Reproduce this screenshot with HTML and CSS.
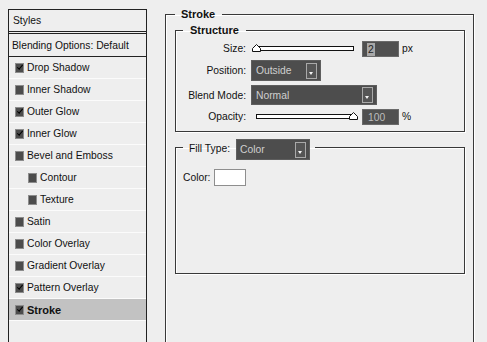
FILE: index.html
```html
<!DOCTYPE html>
<html lang="en">
<head>
  <meta charset="UTF-8">
  <title>Layer Style - Stroke</title>
  <link rel="stylesheet" href="styles.css">
</head>
<body>
  <div class="page">
    <aside class="styles-panel">
      <div class="panel-head">Styles</div>
      <div class="panel-row blend">Blending Options: Default</div>
      <div class="panel-row"><span class="box on"></span>Drop Shadow</div>
      <div class="panel-row"><span class="box"></span>Inner Shadow</div>
      <div class="panel-row"><span class="box on"></span>Outer Glow</div>
      <div class="panel-row"><span class="box on"></span>Inner Glow</div>
      <div class="panel-row"><span class="box"></span>Bevel and Emboss</div>
      <div class="panel-row sub"><span class="box"></span>Contour</div>
      <div class="panel-row sub"><span class="box"></span>Texture</div>
      <div class="panel-row"><span class="box"></span>Satin</div>
      <div class="panel-row"><span class="box"></span>Color Overlay</div>
      <div class="panel-row"><span class="box"></span>Gradient Overlay</div>
      <div class="panel-row"><span class="box on"></span>Pattern Overlay</div>
      <div class="panel-row active"><span class="box on"></span>Stroke</div>
    </aside>

    <fieldset class="group outer">
      <legend class="title">Stroke</legend>

      <fieldset class="group structure">
        <legend class="title">Structure</legend>
        <div class="form-grid">
          <label>Size:</label>
          <div class="ctrl">
            <div class="slider">
              <div class="track"></div>
              <svg class="thumb" width="9" height="8" viewBox="0 0 9 8"><polygon points="4.5,0.5 8.5,4.5 8.5,7.5 0.5,7.5 0.5,4.5" fill="#fff" stroke="#111"/></svg>
            </div>
            <span class="num"><span class="picked">2</span></span>
            <span class="unit">px</span>
          </div>

          <label>Position:</label>
          <div class="ctrl">
            <span class="select position">Outside<span class="arrow"></span></span>
          </div>

          <label>Blend Mode:</label>
          <div class="ctrl">
            <span class="select blend-mode">Normal<span class="arrow"></span></span>
          </div>

          <label>Opacity:</label>
          <div class="ctrl">
            <div class="slider">
              <div class="track"></div>
              <svg class="thumb end" width="9" height="8" viewBox="0 0 9 8"><polygon points="4.5,0.5 8.5,4.5 8.5,7.5 0.5,7.5 0.5,4.5" fill="#fff" stroke="#111"/></svg>
            </div>
            <span class="num">100</span>
            <span class="unit">%</span>
          </div>
        </div>
      </fieldset>

      <fieldset class="group fill">
        <legend class="fill-legend">
          <span>Fill Type:</span>
          <span class="select fill-type">Color<span class="arrow"></span></span>
        </legend>
        <div class="fill-body">
          <label>Color:</label>
          <span class="swatch"></span>
        </div>
      </fieldset>
    </fieldset>
  </div>
</body>
</html>
```

FILE: styles.css
```css
html, body {
  margin: 0;
  height: 100%;
  overflow: hidden;
}

body {
  background: #eeeeee;
  font-family: 'Liberation Sans', Arial, sans-serif;
  font-size: 10.3px;
  color: #111;
}

.page {
  display: flex;
  align-items: flex-start;
}

/* left list of effects */
.styles-panel {
  margin: 9px 0 0 8px;
  width: 137px;
  height: 333px;
  border: 1px solid #222;
  border-bottom: none;
}

.panel-head {
  height: 21px;
  line-height: 21px;
  padding-left: 4px;
  border-bottom: 3px double #222;
}

.panel-row {
  display: flex;
  align-items: center;
  gap: 3px;
  height: 21px;
  padding-left: 6px;
  border-bottom: 1px solid #fbfbfb;
}

.panel-row.blend {
  height: 22px;
  padding-left: 3px;
  border-bottom: 1px solid #222;
}

.panel-row.sub {
  padding-left: 19px;
}

.panel-row.active {
  background: #c2c2c2;
  font-weight: bold;
  font-size: 11px;
}

.box {
  position: relative;
  width: 7px;
  height: 8px;
  background: #4c4c4c;
  border: 1px solid #8c8c8c;
  flex: none;
}

.box.on::after {
  content: "";
  position: absolute;
  left: 1px;
  top: 1px;
  width: 5px;
  height: 2px;
  border-left: 1.5px solid #000;
  border-bottom: 1.5px solid #000;
  transform: rotate(-50deg);
}

/* grouped boxes */
.group {
  margin: 0;
  padding: 0;
  min-width: 0;
  border: 1px solid #383838;
  box-shadow: 1px 1px 0 #fff, inset 1px 1px 0 #fff;
}

.title {
  font-weight: bold;
  font-size: 11px;
  line-height: 13px;
  padding: 0 7px;
  margin-left: 7px;
}

.outer {
  margin: 8px 0 0 18px;
  width: 290px;
  height: 340px;
  padding: 0 8px 0 9px;
}

.outer > .title {
  margin-left: 0;
  padding: 0 7px 0 6px;
}

.structure {
  margin-top: 3px;
}

.form-grid {
  display: grid;
  grid-template-columns: 70px 1fr;
  grid-template-rows: 15px 21px 20px 15px;
  column-gap: 5px;
  row-gap: 4px;
  padding: 4px 0 7px;
}

.form-grid label {
  text-align: right;
  align-self: center;
}

.ctrl {
  display: flex;
  align-items: center;
}

.slider {
  position: relative;
  width: 106px;
  height: 15px;
  margin-left: 1px;
}

.track {
  margin: 5px 4px 0;
  height: 3px;
  background: #fff;
  border: 1px solid #111;
}

.thumb {
  position: absolute;
  left: 0;
  top: 3px;
}

.thumb.end {
  left: auto;
  right: 0;
}

.num {
  box-sizing: border-box;
  width: 37px;
  height: 16px;
  margin-left: 4px;
  padding-left: 5px;
  line-height: 15px;
  background: #505050;
  border: 1px solid #6a6a6a;
  color: #bdbdbd;
}

.picked {
  display: inline-block;
  padding: 0 1px;
  margin-left: -1px;
  background: #a8a8a8;
  color: #222;
  line-height: 13px;
}

.unit {
  margin-left: 3px;
}

.select {
  box-sizing: border-box;
  display: flex;
  align-items: center;
  justify-content: space-between;
  padding: 0 3px 0 4px;
  background: #4d4d4d;
  border: 1px solid #5e5e5e;
  color: #cfcfcf;
}

.select.position {
  width: 70px;
  height: 21px;
}

.select.blend-mode {
  width: 126px;
  height: 20px;
}

.arrow {
  position: relative;
  box-sizing: border-box;
  width: 11px;
  height: 16px;
  background: #555;
  border: 1px solid #a9a9a9;
}

.arrow::after {
  content: "";
  position: absolute;
  left: 2px;
  top: 8px;
  border-left: 2.5px solid transparent;
  border-right: 2.5px solid transparent;
  border-top: 3px solid #f4f4f4;
}

/* fill type */
.fill {
  margin-top: 7px;
}

.fill-legend {
  display: flex;
  align-items: flex-start;
  gap: 6px;
  height: 17px;
  margin-left: 7px;
  padding: 0 5px 0 6px;
}

.fill-legend > span:first-child {
  line-height: 19px;
}

.select.fill-type {
  width: 74px;
  height: 21px;
  margin-bottom: -4px;
  padding-left: 3px;
}

.fill-body {
  display: flex;
  align-items: flex-start;
  gap: 4px;
  height: 104px;
  padding: 13px 0 0 7px;
}

.fill-body label {
  line-height: 17px;
}

.swatch {
  box-sizing: border-box;
  width: 32px;
  height: 17px;
  background: #fff;
  border: 1px solid #8e8e8e;
}
```
